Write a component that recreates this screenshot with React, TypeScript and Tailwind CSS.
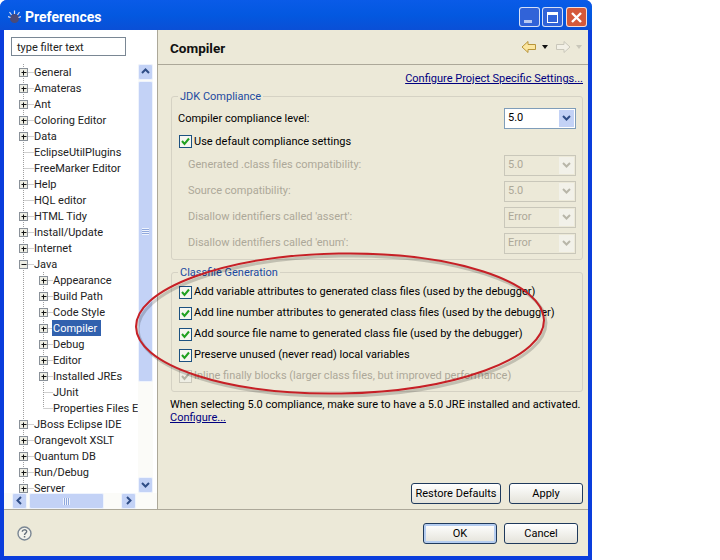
const font = { fontFamily: 'Roboto, "Noto Sans", sans-serif' };

type Node = { label: string; kind: "plus" | "minus" | "leaf"; child?: boolean; last?: boolean; selected?: boolean };

const tree: Node[] = [
  { label: "General", kind: "plus" },
  { label: "Amateras", kind: "plus" },
  { label: "Ant", kind: "plus" },
  { label: "Coloring Editor", kind: "plus" },
  { label: "Data", kind: "plus" },
  { label: "EclipseUtilPlugins", kind: "leaf" },
  { label: "FreeMarker Editor", kind: "leaf" },
  { label: "Help", kind: "plus" },
  { label: "HQL editor", kind: "leaf" },
  { label: "HTML Tidy", kind: "plus" },
  { label: "Install/Update", kind: "plus" },
  { label: "Internet", kind: "plus" },
  { label: "Java", kind: "minus" },
  { label: "Appearance", kind: "plus", child: true },
  { label: "Build Path", kind: "plus", child: true },
  { label: "Code Style", kind: "plus", child: true },
  { label: "Compiler", kind: "plus", child: true, selected: true },
  { label: "Debug", kind: "plus", child: true },
  { label: "Editor", kind: "plus", child: true },
  { label: "Installed JREs", kind: "plus", child: true },
  { label: "JUnit", kind: "leaf", child: true },
  { label: "Properties Files Editor", kind: "leaf", child: true, last: true },
  { label: "JBoss Eclipse IDE", kind: "plus" },
  { label: "Orangevolt XSLT", kind: "plus" },
  { label: "Quantum DB", kind: "plus" },
  { label: "Run/Debug", kind: "plus" },
  { label: "Server", kind: "plus" },
];

// dotted guides and the +/- box of one tree row, drawn in coordinates relative to x=4
const TreeGuide = ({ node }: { node: Node }) => {
  const cx = node.child ? 39.5 : 19.5;
  const width = node.child ? 49 : 30;
  const dots = { stroke: "#a0a0a0", strokeDasharray: "1 1" };
  return (
    <svg width={width} height={16} className="shrink-0">
      <line x1={19.5} y1={0} x2={19.5} y2={16} {...dots} />
      {node.child && <line x1={39.5} y1={0} x2={39.5} y2={node.last ? 8 : 16} {...dots} />}
      <line x1={cx} y1={8.5} x2={width} y2={8.5} {...dots} />
      {node.kind !== "leaf" && (
        <g>
          <rect x={cx - 4} y={4.5} width={8} height={8} fill="#eeeee4" stroke="#8a9199" />
          <line x1={cx - 2} y1={8.5} x2={cx + 3} y2={8.5} stroke="#111" />
          {node.kind === "plus" && <line x1={cx} y1={6.5} x2={cx} y2={11.5} stroke="#111" />}
        </g>
      )}
    </svg>
  );
};

const ScrollButton = ({ dir }: { dir: "up" | "down" | "left" | "right" }) => {
  const points = {
    up: "4,9 7.5,5.5 11,9",
    down: "4,6 7.5,9.5 11,6",
    left: "9,4 5.5,7.5 9,11",
    right: "6,4 9.5,7.5 6,11",
  }[dir];
  return (
    <div className="w-[15px] h-[16px] shrink-0 rounded-[2px] border border-[#eef3fd] bg-[#c3d2f6]">
      <svg width={13} height={14} viewBox="1 1 13 14">
        <polyline points={points} fill="none" stroke="#2f4d86" strokeWidth={2} />
      </svg>
    </div>
  );
};

const Check = ({ disabled }: { disabled?: boolean }) => (
  <div
    className={`w-[13px] h-[13px] shrink-0 border ${
      disabled ? "border-[#c9c7ba] bg-[#eeeee4]" : "border-[#1c5180] bg-[#f6f6f0]"
    }`}
  >
    <svg width={11} height={11} viewBox="0 0 11 11">
      <polyline
        points="2,5 4.5,8 9,2.5"
        fill="none"
        stroke={disabled ? "#b5b3a5" : "#21a121"}
        strokeWidth={2}
      />
    </svg>
  </div>
);

const Combo = ({ value, disabled }: { value: string; disabled?: boolean }) => (
  <div
    className={`ml-auto w-[72px] h-[21px] shrink-0 flex items-center border p-px ${
      disabled ? "border-[#c9c7ba] text-[#aca899]" : "border-[#7f9db9] bg-white text-black"
    }`}
  >
    <span className="flex-1 pl-[2px]">{value}</span>
    <div
      className={`w-[15px] h-[17px] flex items-center justify-center ${
        disabled ? "bg-[#f2f1e9]" : "bg-[#c3d2f6]"
      }`}
    >
      <svg width={11} height={9} viewBox="0 0 11 9">
        <polyline
          points="2,2 5.5,5.5 9,2"
          fill="none"
          stroke={disabled ? "#b8b6a8" : "#2f4d86"}
          strokeWidth={2}
        />
      </svg>
    </div>
  </div>
);

const Group = ({ title, className, children }: { title: string; className: string; children: React.ReactNode }) => (
  <div className={`border border-[#d5d2c4] rounded-[3px] ${className}`}>
    <div className="h-0 flex pl-[6px]">
      <span className="h-[14px] -mt-[7px] px-[2px] leading-[14px] bg-[#ece9d8] text-[#1c4aa0]">{title}</span>
    </div>
    {children}
  </div>
);

const Button = ({ label, className }: { label: string; className: string }) => (
  <button
    className={`h-[21px] rounded-[3px] border border-[#1f3a5c] bg-gradient-to-b from-white to-[#e4e3da] text-black leading-none ${className}`}
  >
    {label}
  </button>
);

const disabledRows = [
  ["Generated .class files compatibility:", "5.0"],
  ["Source compatibility:", "5.0"],
  ["Disallow identifiers called 'assert':", "Error"],
  ["Disallow identifiers called 'enum':", "Error"],
];

const classfileChecks = [
  "Add variable attributes to generated class files (used by the debugger)",
  "Add line number attributes to generated class files (used by the debugger)",
  "Add source file name to generated class file (used by the debugger)",
  "Preserve unused (never read) local variables",
];

const TitleButton = ({ className, children }: { className: string; children: React.ReactNode }) => (
  <div className={`w-[21px] h-[20px] rounded-[3px] border border-white/80 flex items-center justify-center ${className}`}>
    {children}
  </div>
);

export default function App() {
  return (
    <div style={font} className="relative w-[720px] h-[560px] bg-white text-[11px] text-black overflow-hidden whitespace-nowrap">
      <div className="w-[592px] h-[560px] flex flex-col rounded-t-[7px] bg-[#0a3ddc] overflow-hidden">
        {/* title bar */}
        <div className="h-[30px] shrink-0 flex items-center pt-[4px] pl-[8px] pr-[5px] bg-gradient-to-b from-[#0a5be8] via-[#0358e0] to-[#0a4fd6]">
          <svg width={13} height={14} viewBox="0 0 13 14" className="shrink-0">
            <circle cx={6.5} cy={8.5} r={4.5} fill="#4a4a78" />
            <g stroke="#d8dcf0" strokeWidth={1.2}>
              <line x1={6.5} y1={0.5} x2={6.5} y2={4} />
              <line x1={1.5} y1={2} x2={3.5} y2={5} />
              <line x1={11.5} y1={2} x2={9.5} y2={5} />
              <line x1={0} y1={6.5} x2={2.5} y2={7.5} />
              <line x1={13} y1={6.5} x2={10.5} y2={7.5} />
            </g>
          </svg>
          <span className="ml-[4px] text-white font-bold text-[14px]">Preferences</span>
          <div className="ml-auto flex gap-[2px]">
            <TitleButton className="bg-[#3163d8]">
              <div className="w-[8px] h-[3px] mt-[9px] -ml-[3px] bg-[#b7c9f2]" />
            </TitleButton>
            <TitleButton className="bg-[#3163d8]">
              <div className="w-[11px] h-[11px] border border-white border-t-[3px]" />
            </TitleButton>
            <TitleButton className="ml-[1px] bg-[#d4593a]">
              <svg width={13} height={13} viewBox="0 0 13 13">
                <path d="M2 2 L11 11 M11 2 L2 11" stroke="#fff" strokeWidth={2.4} />
              </svg>
            </TitleButton>
          </div>
        </div>

        {/* client area */}
        <div className="flex-1 mx-[4px] mb-[4px] flex flex-col bg-[#ece9d8] min-h-0">
          <div className="h-[480px] shrink-0 flex border-b border-[#aca899]">
            {/* left pane */}
            <div className="w-[153px] shrink-0 flex flex-col bg-white">
              <div className="h-[34px] pt-[7px] pl-[7px]">
                <div className="w-[115px] h-[19px] border border-[#7a8794] pl-[5px] leading-[19px] text-[#222]">
                  type filter text
                </div>
              </div>
              <div className="h-[429px] flex">
                <div className="w-[134px] shrink-0 overflow-hidden">
                  {tree.map((node) => (
                    <div key={node.label} className="h-4 flex items-center text-[#222]">
                      <TreeGuide node={node} />
                      <span
                        className={`h-4 leading-[17px] pl-[1px] pr-[4px] -ml-[1px] ${
                          node.selected ? "bg-[#3161ae] text-white" : ""
                        }`}
                      >
                        {node.label}
                      </span>
                    </div>
                  ))}
                </div>
                <div className="w-[15px] shrink-0 flex flex-col bg-[#fbfbf8]">
                  <ScrollButton dir="up" />
                  <div className="h-[301px] mt-px rounded-[2px] border border-[#eef3fd] bg-[#c3d2f6] flex items-center justify-center">
                    <div className="w-[7px] h-[7px] bg-[repeating-linear-gradient(#eef3fd_0_1px,#8fa8dc_1px_2px)]" />
                  </div>
                  <div className="flex-1" />
                  <ScrollButton dir="down" />
                </div>
              </div>
              <div className="h-[16px] flex pl-[8px] bg-[#fbfbf8]">
                <ScrollButton dir="left" />
                <div className="w-[75px] ml-[2px] rounded-[2px] border border-[#eef3fd] bg-[#c3d2f6] flex items-center justify-center">
                  <div className="w-[7px] h-[7px] bg-[repeating-linear-gradient(90deg,#eef3fd_0_1px,#8fa8dc_1px_2px)]" />
                </div>
                <div className="w-[17px]" />
                <ScrollButton dir="right" />
              </div>
            </div>

            {/* right pane */}
            <div className="flex-1 flex flex-col border-l border-[#aca899] min-w-0">
              <div className="h-[35px] shrink-0 flex items-center pt-[3px] pl-[12px] pr-[6px] border-b border-[#aca899]">
                <span className="font-bold text-[13.5px] text-[#111]">Compiler</span>
                <div className="ml-auto flex items-center -mt-[3px]">
                  <svg width={16} height={14} viewBox="0 0 16 14">
                    <path d="M1 7 L7 1.5 V4.5 H14.5 V9.5 H7 V12.5 Z" fill="#fbe6a0" stroke="#b8953a" />
                  </svg>
                  <svg width={6} height={4} viewBox="0 0 6 4" className="ml-[5px]">
                    <path d="M0 0 H6 L3 4 Z" fill="#111" />
                  </svg>
                  <svg width={16} height={14} viewBox="0 0 16 14" className="ml-[7px]">
                    <path d="M15 7 L9 1.5 V4.5 H1.5 V9.5 H9 V12.5 Z" fill="#f2f0e6" stroke="#c9c7ba" />
                  </svg>
                  <svg width={6} height={4} viewBox="0 0 6 4" className="ml-[5px]">
                    <path d="M0 0 H6 L3 4 Z" fill="#c9c7ba" />
                  </svg>
                </div>
              </div>

              <div className="flex-1 flex flex-col pl-[13px] pr-[5px] pb-[5px] min-h-0">
                <div className="h-[31px] pt-[6px] text-right text-[#00007f] underline leading-[16px]">
                  Configure Project Specific Settings...
                </div>

                <Group title="JDK Compliance" className="h-[164px] shrink-0">
                  <div className="pt-[11px] pl-[7px] pr-[6px]">
                    <div className="h-[21px] flex items-center">
                      <span className="-ml-px mt-px">Compiler compliance level:</span>
                      <Combo value="5.0" />
                    </div>
                    <div className="h-[13px] mt-[6px] flex items-center gap-[2px]">
                      <Check />
                      <span className="mt-px">Use default compliance settings</span>
                    </div>
                    <div className="mt-[4px]">
                      {disabledRows.map(([label, value]) => (
                        <div key={label} className="h-[26px] flex items-center pl-[9px] text-[#aca899]">
                          <span className="mt-px">{label}</span>
                          <Combo value={value} disabled />
                        </div>
                      ))}
                    </div>
                  </div>
                </Group>

                <Group title="Classfile Generation" className="h-[120px] mt-[12px] shrink-0">
                  <div className="flex flex-col pt-[9px] pl-[7px]">
                    {classfileChecks.map((label) => (
                      <div key={label} className="h-[21px] flex items-center gap-[2px]">
                        <Check />
                        {label}
                      </div>
                    ))}
                    <div className="h-[21px] flex items-center gap-[2px] text-[#aca899]">
                      <Check disabled />
                      Inline finally blocks (larger class files, but improved performance)
                    </div>
                  </div>
                </Group>

                <div className="mt-[6px] -ml-px leading-[13px]">
                  When selecting 5.0 compliance, make sure to have a 5.0 JRE installed and activated.
                </div>
                <div className="-ml-px leading-[13px] text-[#00007f] underline">Configure...</div>

                <div className="mt-auto flex justify-end gap-[8px]">
                  <Button label="Restore Defaults" className="w-[90px]" />
                  <Button label="Apply" className="w-[74px]" />
                </div>
              </div>
            </div>
          </div>

          {/* bottom bar */}
          <div className="flex-1 flex items-center pl-[13px] pr-[10px]">
            <svg width={15} height={15} viewBox="0 0 15 15">
              <circle cx={7.5} cy={7.5} r={6.5} fill="#f4f3ec" stroke="#7b8794" strokeWidth={1.4} />
              <path d="M5.3 5.8 C5.3 3.2 9.7 3.2 9.7 5.6 C9.7 7.2 7.5 7 7.5 9" fill="none" stroke="#66717c" strokeWidth={1.4} />
              <rect x={6.8} y={10} width={1.5} height={1.5} fill="#66717c" />
            </svg>
            <div className="ml-auto flex gap-[7px]">
              <Button label="OK" className="w-[74px] border-[#1b4a8a] shadow-[inset_0_0_0_2px_#b5cdf0]" />
              <Button label="Cancel" className="w-[74px]" />
            </div>
          </div>
        </div>
      </div>

      {/* red annotation drawn over the screenshot */}
      <svg width={720} height={560} className="absolute left-0 top-0 pointer-events-none">
        <ellipse cx={342} cy={326} rx={204} ry={70} fill="none" stroke="#000" strokeOpacity={0.18} strokeWidth={3} transform="rotate(-1 342 326)" />
        <ellipse cx={340} cy={323.5} rx={204} ry={70} fill="none" stroke="#c62026" strokeWidth={2} transform="rotate(-1 340 323.5)" />
      </svg>
    </div>
  );
}
